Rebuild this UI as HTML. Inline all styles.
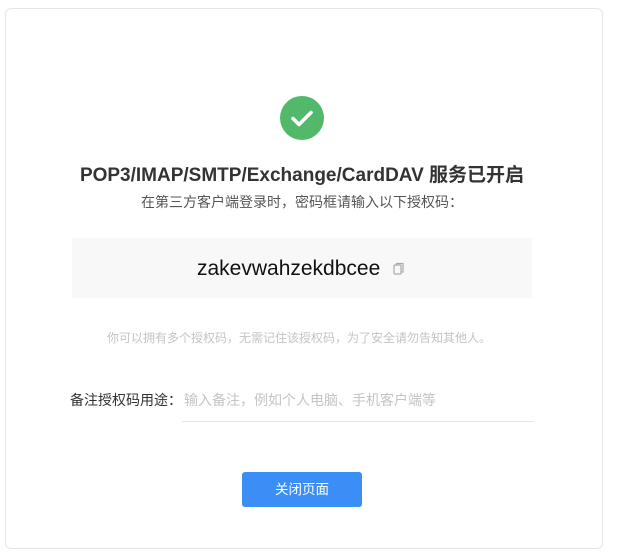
<!DOCTYPE html>
<html><head><meta charset="utf-8"><style>
*{margin:0;padding:0;box-sizing:border-box}
body{width:617px;height:552px;background:#fff;font-family:"Liberation Sans","Noto Sans CJK SC",sans-serif;position:relative;overflow:hidden}
.card{position:absolute;left:5px;top:8px;width:598px;height:541px;border:1px solid #e6e6e6;border-radius:6px}
.abs{position:absolute}
.c{left:0;width:604px;text-align:center}
</style></head><body>
<div class="card"></div>
<svg class="abs" style="left:280px;top:96px" width="44" height="44" viewBox="0 0 44 44"><circle cx="22" cy="22" r="22" fill="#52b96a"/><path d="M13 22.5l6 6 12-12" stroke="#fff" stroke-width="3.6" fill="none" stroke-linecap="round" stroke-linejoin="round"/></svg>
<div class="abs c" style="top:160px;font-size:19px;font-weight:bold;color:#333">POP3/IMAP/SMTP/Exchange/CardDAV 服务已开启</div>
<div class="abs c" style="top:192px;font-size:14px;color:#555">在第三方客户端登录时，密码框请输入以下授权码：</div>
<div class="abs" style="left:72px;top:238px;width:460px;height:60px;background:#f8f8f8"></div>
<div class="abs" style="left:197px;top:257px;font-size:21px;color:#111">zakevwahzekdbcee</div>
<svg class="abs" style="left:393px;top:262px" width="12" height="13" viewBox="0 0 12 13"><rect x="1" y="3" width="7" height="9" rx="1" fill="none" stroke="#aaa" stroke-width="1.2"/><path d="M3.5 3V1.5h6.5v8.5H8" fill="none" stroke="#aaa" stroke-width="1.2"/></svg>
<div class="abs c" style="top:329px;font-size:12px;color:#c4c4c4;left:0;width:598px">你可以拥有多个授权码，无需记住该授权码，为了安全请勿告知其他人。</div>
<div class="abs" style="left:70px;top:390px;font-size:14px;color:#333">备注授权码用途：</div>
<div class="abs" style="left:184px;top:390px;font-size:14px;color:#c4c4c4">输入备注，例如个人电脑、手机客户端等</div>
<div class="abs" style="left:182px;top:421px;width:352px;height:1px;background:#e6e6e6"></div>
<div class="abs" style="left:242px;top:472px;width:120px;height:35px;background:#3a8ef6;border-radius:3px;color:#fff;font-size:13.5px;text-align:center;line-height:35px">关闭页面</div>
</body></html>
